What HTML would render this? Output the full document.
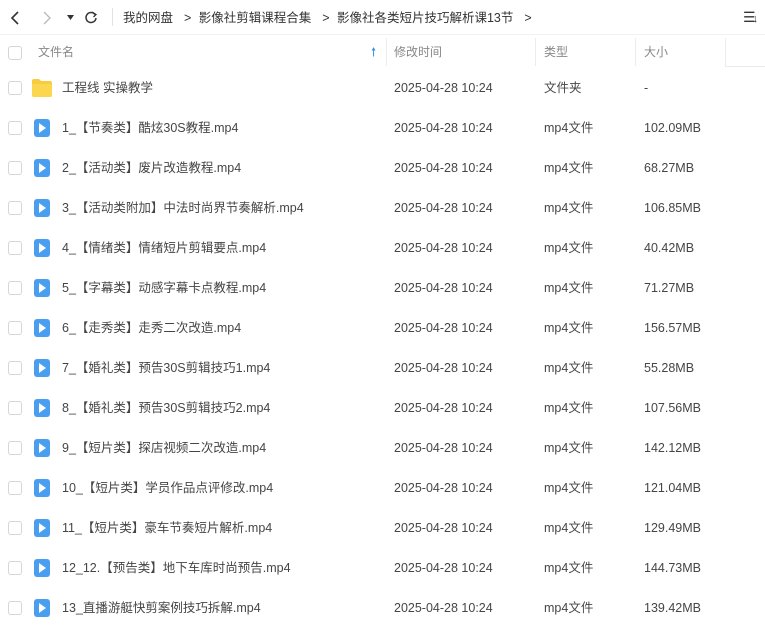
<!DOCTYPE html>
<html><head><meta charset="utf-8"><style>
*{margin:0;padding:0;box-sizing:border-box}
body{width:765px;height:626px;background:#fff;font-family:"Liberation Sans","Noto Sans CJK SC",sans-serif;color:#454545;font-size:12.5px;line-height:16px;position:relative;overflow:hidden}
.a{position:absolute;white-space:nowrap;line-height:16px}
.cb{position:absolute;left:8px;width:14px;height:14px;border:1px solid #d6d6d6;border-radius:3px;background:#fff}
.vi{position:absolute;left:34px;width:16px;height:18px;background:#4a9eef;border-radius:3px}
.vi:after{content:"";position:absolute;left:5px;top:4px;border-left:7px solid #fff;border-top:5px solid transparent;border-bottom:5px solid transparent}
.sep{position:absolute;top:38px;width:1px;height:28px;background:#ececec}
.h{color:#888;font-size:12px}
.bc{font-size:12.5px;color:#333}
</style></head><body>
<svg class="a" style="left:8px;top:10px" width="14" height="16"><path d="M10 2L4 8L10 14" stroke="#333" stroke-width="1.6" fill="none"/></svg>
<svg class="a" style="left:40px;top:10px" width="14" height="16"><path d="M4 2L10 8L4 14" stroke="#bbb" stroke-width="1.4" fill="none"/></svg>
<svg class="a" style="left:67px;top:15px" width="8" height="6"><path d="M0 0H7L3.5 5Z" fill="#333"/></svg>
<svg class="a" style="left:84px;top:10px" width="14" height="14"><path d="M11 4.5A5 5 0 1 0 12 8" stroke="#333" stroke-width="1.5" fill="none"/><path d="M8 2L12 4.5L9.5 7" stroke="#333" stroke-width="1.3" fill="none"/></svg>
<div class="a" style="left:112px;top:8px;width:1px;height:18px;background:#e2e2e2"></div>
<div class="a bc" style="left:123px;top:10px">我的网盘&nbsp;&nbsp;<b style="font-weight:normal;margin:0 4px">&gt;</b>&nbsp;影像社剪辑课程合集&nbsp;&nbsp;<b style="font-weight:normal;margin:0 4px">&gt;</b>&nbsp;影像社各类短片技巧解析课13节&nbsp;&nbsp;<b style="font-weight:normal;margin:0 4px">&gt;</b></div>
<div class="a" style="left:743px;top:9px;font-size:14px;color:#333">☰<span style="font-size:11px;margin-left:-3px">↓</span></div>
<div class="a" style="left:0;top:34px;width:765px;height:1px;background:#f2f2f2"></div>
<div class="cb" style="top:46px"></div>
<div class="a h" style="left:38px;top:44px">文件名</div>
<div class="a" style="left:371px;top:44px;color:#3a8ee6;font-size:12px">🠕</div>
<div class="sep" style="left:386px"></div>
<div class="a h" style="left:394px;top:44px">修改时间</div>
<div class="sep" style="left:535px"></div>
<div class="a h" style="left:544px;top:44px">类型</div>
<div class="sep" style="left:635px"></div>
<div class="a h" style="left:644px;top:44px">大小</div>
<div class="sep" style="left:725px"></div>
<div class="a" style="left:725px;top:66px;width:40px;height:1px;background:#ececec"></div>

<div class="cb" style="top:81px"></div>
<svg class="a" style="left:32px;top:79px" width="20" height="18"><path d="M0 2Q0 0 2 0H7L9 2H18Q20 2 20 4V16Q20 18 18 18H2Q0 18 0 16Z" fill="#f8cc3e"/><path d="M0 5H20V16Q20 18 18 18H2Q0 18 0 16Z" fill="#fbd750"/></svg>
<div class="a" style="left:62px;top:80px">工程线 实操教学</div>
<div class="a" style="left:394px;top:80px">2025-04-28 10:24</div>
<div class="a" style="left:544px;top:80px">文件夹</div>
<div class="a" style="left:644px;top:80px">-</div>

<div id="rows"></div>
<script>
var d=[["1_【节奏类】酷炫30S教程.mp4","102.09MB"],["2_【活动类】废片改造教程.mp4","68.27MB"],["3_【活动类附加】中法时尚界节奏解析.mp4","106.85MB"],["4_【情绪类】情绪短片剪辑要点.mp4","40.42MB"],["5_【字幕类】动感字幕卡点教程.mp4","71.27MB"],["6_【走秀类】走秀二次改造.mp4","156.57MB"],["7_【婚礼类】预告30S剪辑技巧1.mp4","55.28MB"],["8_【婚礼类】预告30S剪辑技巧2.mp4","107.56MB"],["9_【短片类】探店视频二次改造.mp4","142.12MB"],["10_【短片类】学员作品点评修改.mp4","121.04MB"],["11_【短片类】豪车节奏短片解析.mp4","129.49MB"],["12_12.【预告类】地下车库时尚预告.mp4","144.73MB"],["13_直播游艇快剪案例技巧拆解.mp4","139.42MB"]];
var h="";d.forEach(function(r,i){var y=128+i*40;
h+='<div class="cb" style="top:'+(y-7)+'px"></div><div class="vi" style="top:'+(y-9)+'px"></div><div class="a" style="left:62px;top:'+(y-8)+'px">'+r[0]+'</div><div class="a" style="left:394px;top:'+(y-8)+'px">2025-04-28 10:24</div><div class="a" style="left:544px;top:'+(y-8)+'px">mp4文件</div><div class="a" style="left:644px;top:'+(y-8)+'px">'+r[1]+'</div>';});
document.getElementById("rows").innerHTML=h;
</script>
</body></html>
